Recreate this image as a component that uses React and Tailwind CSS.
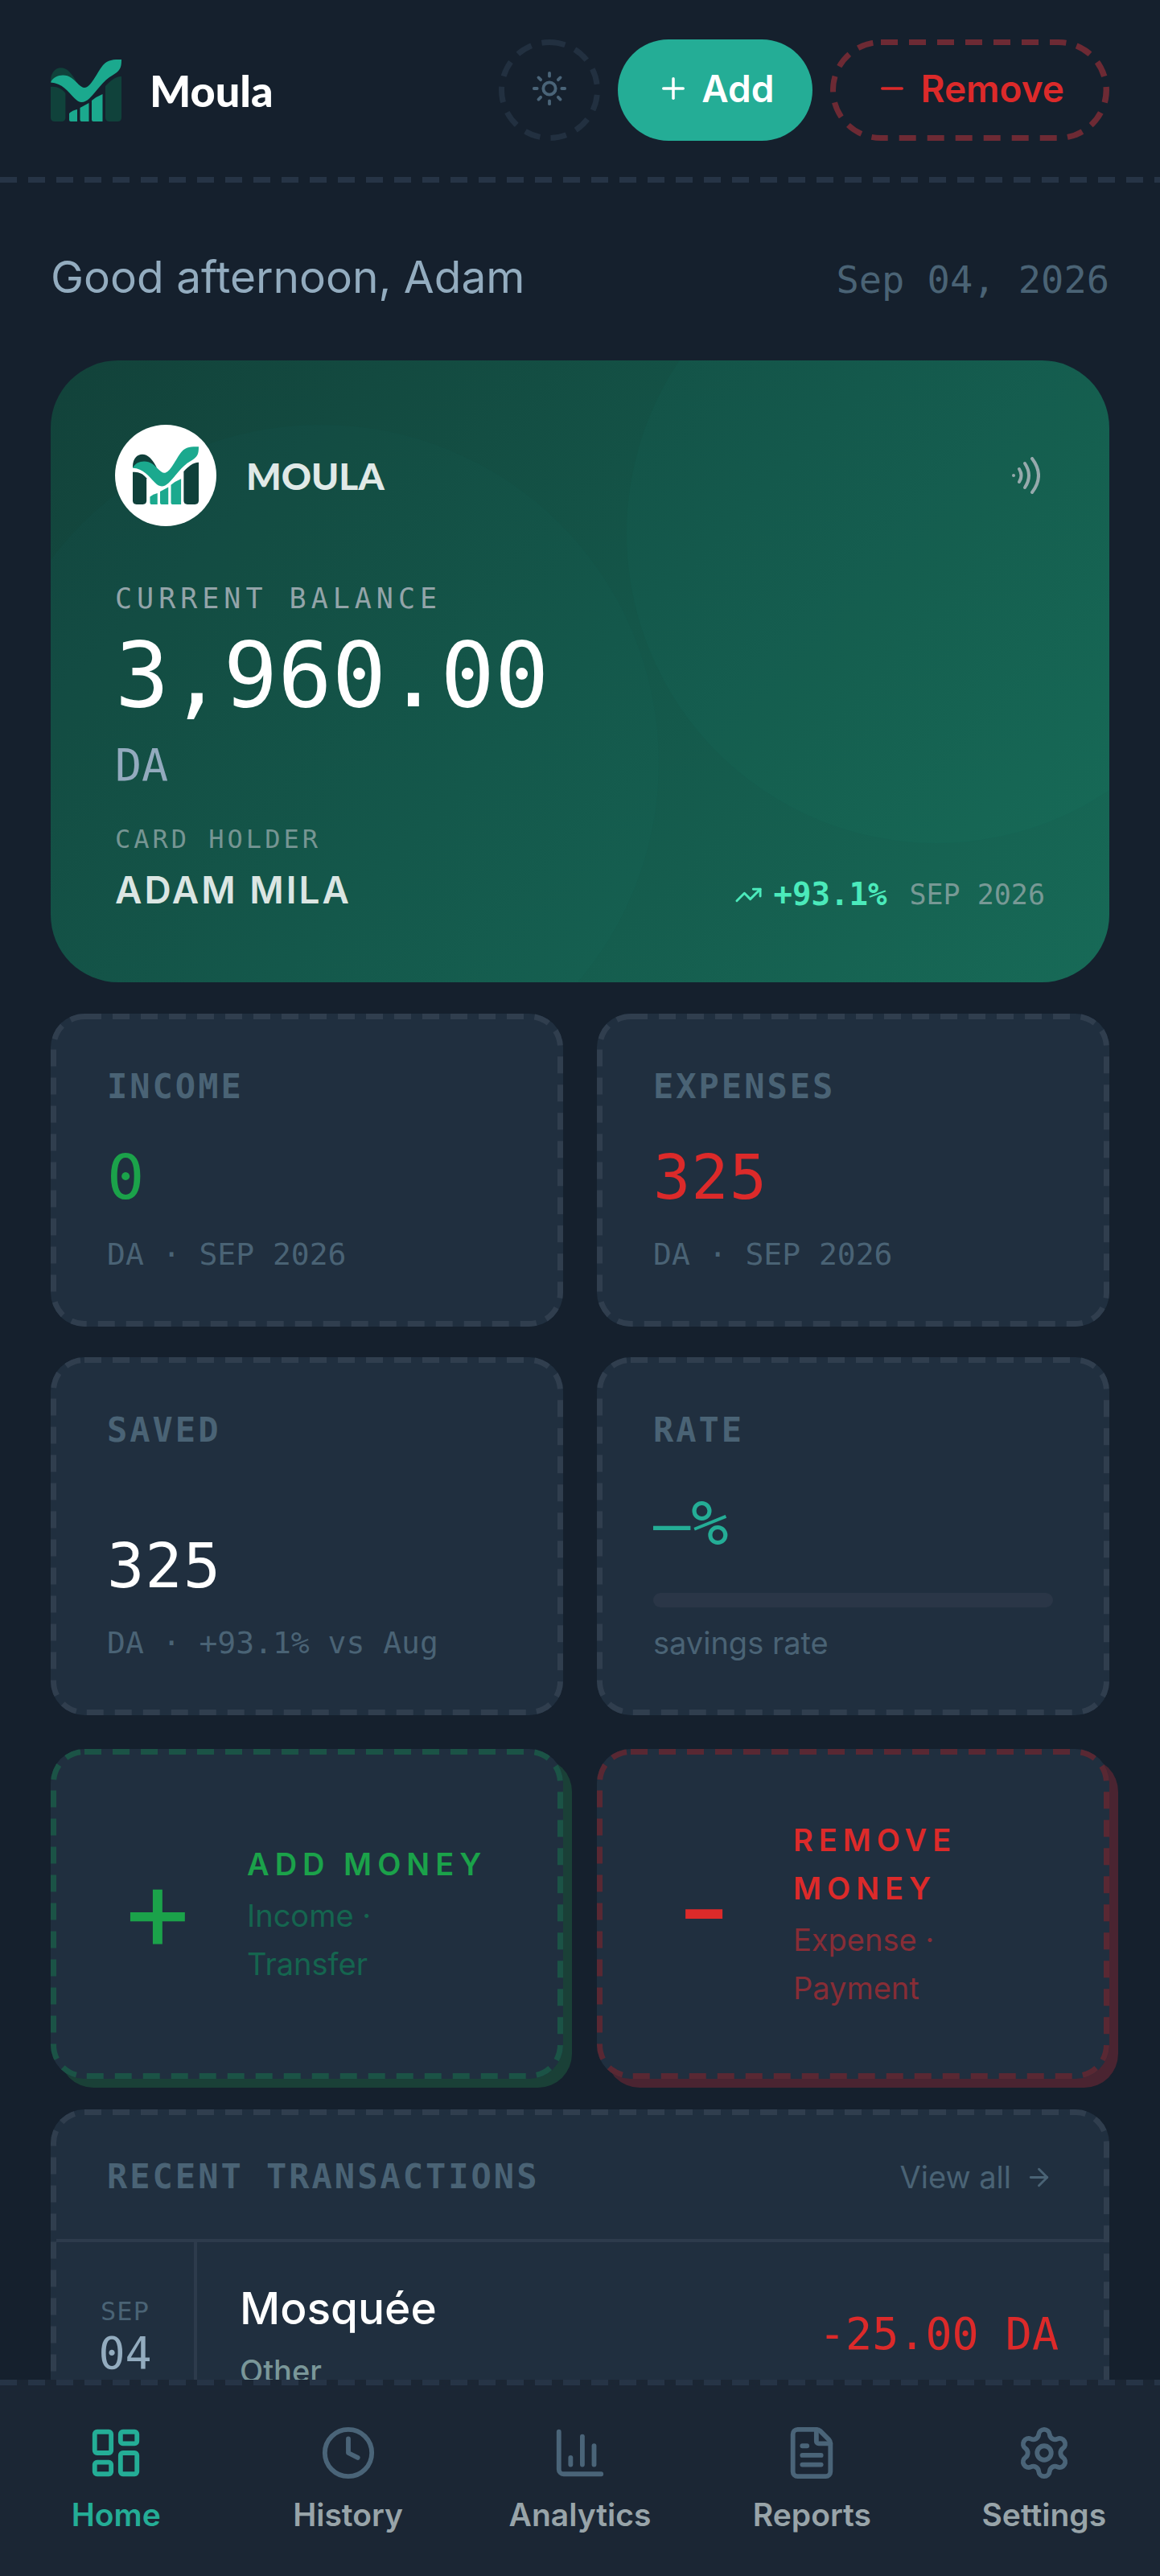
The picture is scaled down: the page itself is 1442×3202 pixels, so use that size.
import {
  ArrowRight,
  ChartColumn,
  Clock,
  FileText,
  LayoutDashboard,
  Minus,
  Plus,
  Settings,
  Sun,
  TrendingUp,
} from 'lucide-react';

const navItems = [
  { label: 'Home', icon: LayoutDashboard, active: true },
  { label: 'History', icon: Clock },
  { label: 'Analytics', icon: ChartColumn },
  { label: 'Reports', icon: FileText },
  { label: 'Settings', icon: Settings },
];

const transactions = [
  { id: 1, month: 'SEP', day: '04', title: 'Mosquée', category: 'Other', amount: '-25.00 DA' },
];

// Dashed outline, half of the stroke is clipped away by the rounded box
const DashedOutline = ({ radius = 42, className }) => (
  <svg
    aria-hidden="true"
    className={`pointer-events-none absolute inset-0 h-full w-full overflow-hidden ${className}`}
  >
    <rect
      width="100%"
      height="100%"
      rx={radius}
      fill="none"
      stroke="currentColor"
      strokeWidth="14"
      strokeDasharray="21 14"
    />
  </svg>
);

const DashedLine = () => (
  <div className="h-[7px] bg-[repeating-linear-gradient(90deg,#263446_0_21px,transparent_21px_35px)]" />
);

const Logo = ({ className }) => (
  <svg viewBox="0 0 88 77" className={className} aria-hidden="true">
    <g fill="currentColor">
      <path d="M0 34C7 33 14 36 18.400 42V72Q18.400 77 13.500 77H5Q0 77 0 72Z" />
      <path d="M0 28C-.5 10 14 6 23 15C27 19 30 24 32 28L14 22Z" />
      <path d="M68 33C74 27 80 21 88 21V72Q88 77 83 77H73Q68 77 68 72Z" />
    </g>
    <g fill="#1ba98e">
      <path d="M0 28.500C4 19 18 17 26 23C33 28 37 35 42 35C50 35 57 17 65 7C71 0 78 0 88 0C88 11 86 14 77 19.500C65 26 57 40 48 48.500C41 55 35 54 29.500 48C22 40 14 29 0 28.500Z" />
      <path d="M23 67Q27 63 33 62V77H25Q23 77 23 75Z" />
      <path d="M36.500 60Q42 57 47.500 54V77H38.500Q36.500 77 36.500 75Z" />
      <path d="M51 51Q57 46 64.500 43V77H53Q51 77 51 75Z" />
    </g>
  </svg>
);

const Contactless = () => (
  <svg viewBox="0 0 35 46" className="mr-[6px] h-[46px] w-[35px] text-[#96a9ac]" fill="none" stroke="currentColor" strokeWidth="4" strokeLinecap="round">
    <circle cx="2" cy="23" r="2" fill="currentColor" stroke="none" />
    <path d="M9 15Q14 23 9 31" />
    <path d="M16 8Q26 23 16 38" />
    <path d="M25 2Q41 23 25 44" />
  </svg>
);

const Header = () => (
  <header>
    <div className="flex items-center justify-between px-[63px] pt-[49px] pb-[45px]">
      <a href="#home" className="flex items-center gap-[35px]">
        <Logo className="h-[77px] w-[88px] text-[#10423b]" />
        <span className="font-['Lato'] text-[54px] font-black leading-[77px] text-white">Moula</span>
      </a>
      <div className="flex items-center gap-[22px]">
        <button type="button" aria-label="Toggle theme" className="relative flex size-[126px] items-center justify-center rounded-full pb-1 text-[#4a6478]">
          <DashedOutline radius={63} className="rounded-full text-[#223040]" />
          <Sun size={46} />
        </button>
        <button type="button" className="flex h-[126px] items-center gap-[14px] rounded-full bg-[#24ad96] px-[48px] pb-1 text-[46px] font-semibold text-white">
          <Plus size={42} />
          Add
        </button>
        <button type="button" className="relative flex h-[126px] items-center gap-[14px] rounded-full px-[56px] pb-1 text-[46px] font-semibold text-[#dc2a2a]">
          <DashedOutline radius={63} className="rounded-full text-[#6d2a34]" />
          <Minus size={42} />
          Remove
        </button>
      </div>
    </div>
    <DashedLine />
  </header>
);

const BalanceCard = () => (
  <section className="relative overflow-hidden rounded-[84px] bg-linear-135 from-[#12423a] via-[#145649] to-[#176a57] p-[80px] font-['DejaVu_Sans_Mono',monospace]">
    <div className="absolute -top-[170px] -right-[170px] size-[770px] rounded-full bg-[#24ad96]/4" />
    <div className="absolute -bottom-[147px] -left-[84px] size-[840px] rounded-full bg-[#24ad96]/3" />
    <div className="relative">
      <div className="flex items-center justify-between">
        <div className="flex items-center gap-[37px]">
          <div className="flex size-[126px] items-center justify-center rounded-full bg-white">
            <Logo className="h-[72px] w-[82px] text-[#0f403a]" />
          </div>
          <span className="font-['Lato'] text-[46px] font-black text-[#e0e9e7]">MOULA</span>
        </div>
        <Contactless />
      </div>
      <p className="mt-[62px] text-[35px] leading-[56px] tracking-[6px] text-[#93a4a9]">CURRENT BALANCE</p>
      <p className="mt-[11px] text-[112px] leading-[112px] text-white">3,960.00</p>
      <p className="mt-[14px] text-[55px] leading-[84px] text-[#93aabe]">DA</p>
      <div className="mt-[26px] flex items-end justify-between">
        <div>
          <p className="text-[32px] leading-[48px] tracking-[4px] text-[#769593]">CARD HOLDER</p>
          <p className="mt-1 font-['Inter'] text-[46px] font-semibold leading-[70px] tracking-[3px] text-[#dbe6e3]">ADAM MILA</p>
        </div>
        <div className="flex items-center gap-[28px] leading-[58px]">
          <span className="flex items-center gap-[14px] text-[39px] font-bold text-[#4beabb]">
            <TrendingUp size={35} />
            +93.1%
          </span>
          <span className="text-[35px] text-[#789995]">SEP 2026</span>
        </div>
      </div>
    </div>
  </section>
);

const StatCard = ({ label, children }) => (
  <div className="relative flex flex-col rounded-[42px] bg-[#202f3f] px-[70px] pt-[63px] pb-[62px] font-['DejaVu_Sans_Mono',monospace] text-[38px] leading-[56px] text-[#4a6375]">
    <DashedOutline className="rounded-[42px] text-[#303e4e]" />
    <h2 className="text-[42px] font-bold tracking-[3px]">{label}</h2>
    {children}
  </div>
);

const StatValue = ({ className, children }) => (
  <p className={`text-[77px] leading-[92px] tracking-[1px] ${className}`}>{children}</p>
);

const StatGrid = () => (
  <section className="mt-[39px] grid grid-cols-2 gap-x-[42px] gap-y-[38px]">
    <StatCard label="INCOME">
      <StatValue className="mt-[39px] text-[#1ba24a]">0</StatValue>
      <p className="mt-[21px]">DA · SEP 2026</p>
    </StatCard>
    <StatCard label="EXPENSES">
      <StatValue className="mt-[39px] text-[#dc2a2a]">325</StatValue>
      <p className="mt-[21px]">DA · SEP 2026</p>
    </StatCard>
    <StatCard label="SAVED">
      <StatValue className="mt-auto text-white">325</StatValue>
      <p className="mt-[21px]">DA · +93.1% vs Aug</p>
    </StatCard>
    <StatCard label="RATE">
      <StatValue className="mt-[42px] text-[#24ad96]">—%</StatValue>
      <div className="mt-[40px] h-[18px] rounded-full bg-[#2a3647]" />
      <p className="mt-4 font-['Inter']">savings rate</p>
    </StatCard>
  </section>
);

const ActionCard = ({ sign, title, note, color, noteColor, outline, shadow }) => (
  <button
    type="button"
    className={`relative flex items-center gap-[48px] rounded-[42px] bg-[#202f3f] py-[83px] pr-[84px] pl-[70px] text-left text-[38px] leading-[60px] ${color} ${shadow}`}
  >
    <DashedOutline className={`rounded-[42px] ${outline}`} />
    <span className="w-[126px] shrink-0 pb-[14px] text-center text-[144px] leading-none">{sign}</span>
    <span>
      <span className="block font-semibold tracking-[7px]">{title}</span>
      <span className={`mt-1 block ${noteColor}`}>{note}</span>
    </span>
  </button>
);

const RecentTransactions = () => (
  <section className="relative mt-[38px] rounded-[42px] bg-[#202f3f] p-[7px]">
    <DashedOutline className="rounded-[42px] text-[#303e4e]" />
    <div className="flex items-center justify-between border-b-4 border-[#2d3b4c] px-[63px] py-[49px] leading-[56px] text-[#4a6375]">
      <h2 className="font-['DejaVu_Sans_Mono',monospace] text-[42px] font-bold tracking-[3px]">RECENT TRANSACTIONS</h2>
      <a href="#history" className="flex items-center gap-[17px] text-[38px]">
        View all
        <ArrowRight size={35} />
      </a>
    </div>
    <ul>
      {transactions.map((t) => (
        <li key={t.id} className="flex items-stretch">
          <div className="flex w-[175px] flex-col items-center justify-center border-r-4 border-[#2d3b4c] font-['DejaVu_Sans_Mono',monospace]">
            <span className="text-[32px] leading-[48px] tracking-[1px] text-[#4a6375]">{t.month}</span>
            <span className="text-[55px] leading-[56px] text-[#93acbf]">{t.day}</span>
          </div>
          <div className="flex flex-1 items-center justify-between py-[40px] pr-[56px] pl-[53px]">
            <div>
              <p className="text-[55px] font-medium leading-[84px] text-white">{t.title}</p>
              <p className="mt-2 text-[38px] font-medium leading-[56px] text-[#7a9799]">{t.category}</p>
            </div>
            <p className="font-['DejaVu_Sans_Mono',monospace] text-[55px] leading-[84px] text-[#dc2a2a]">{t.amount}</p>
          </div>
        </li>
      ))}
    </ul>
  </section>
);

const BottomNav = () => (
  <nav className="fixed inset-x-0 bottom-0 bg-[#1b2634]">
    <DashedLine />
    <div className="grid grid-cols-5 pt-[49px] pb-[48px]">
      {navItems.map(({ label, icon: Icon, active }) => (
        <a
          key={label}
          href={`#${label.toLowerCase()}`}
          className={`flex flex-col items-center gap-[14px] text-[39px] font-semibold leading-[56px] ${
            active ? 'text-[#24ad96]' : 'text-[#98a4a9]'
          }`}
        >
          <Icon size={70} className={active ? 'text-[#24ad96]' : 'text-[#4a6478]'} />
          {label}
        </a>
      ))}
    </div>
  </nav>
);

const App = () => {
  return (
    <div className="min-h-screen bg-[#15202d] font-['Inter',sans-serif]">
      <Header />
      <main className="px-[63px] pt-[75px] pb-[160px]">
        <div className="mb-[62px] flex items-baseline justify-between">
          <h1 className="text-[55px] leading-[84px] text-[#93acbf]">Good afternoon, Adam</h1>
          <p className="font-['DejaVu_Sans_Mono',monospace] text-[47px] leading-[70px] text-[#4a6375]">Sep 04, 2026</p>
        </div>
        <BalanceCard />
        <StatGrid />
        <section className="mt-[42px] grid grid-cols-2 gap-[42px]">
          <ActionCard
            sign="+"
            title="ADD MONEY"
            note="Income · Transfer"
            color="text-[#1ba24a]"
            noteColor="text-[#15654f]"
            outline="text-[#1b5346]"
            shadow="shadow-[11px_11px_0_#1a4037]"
          />
          <ActionCard
            sign="-"
            title="REMOVE MONEY"
            note="Expense · Payment"
            color="text-[#dc2a2a]"
            noteColor="text-[#872d36]"
            outline="text-[#592833]"
            shadow="shadow-[11px_11px_0_#4a2431]"
          />
        </section>
        <RecentTransactions />
      </main>
      <BottomNav />
    </div>
  );
};

export default App;
